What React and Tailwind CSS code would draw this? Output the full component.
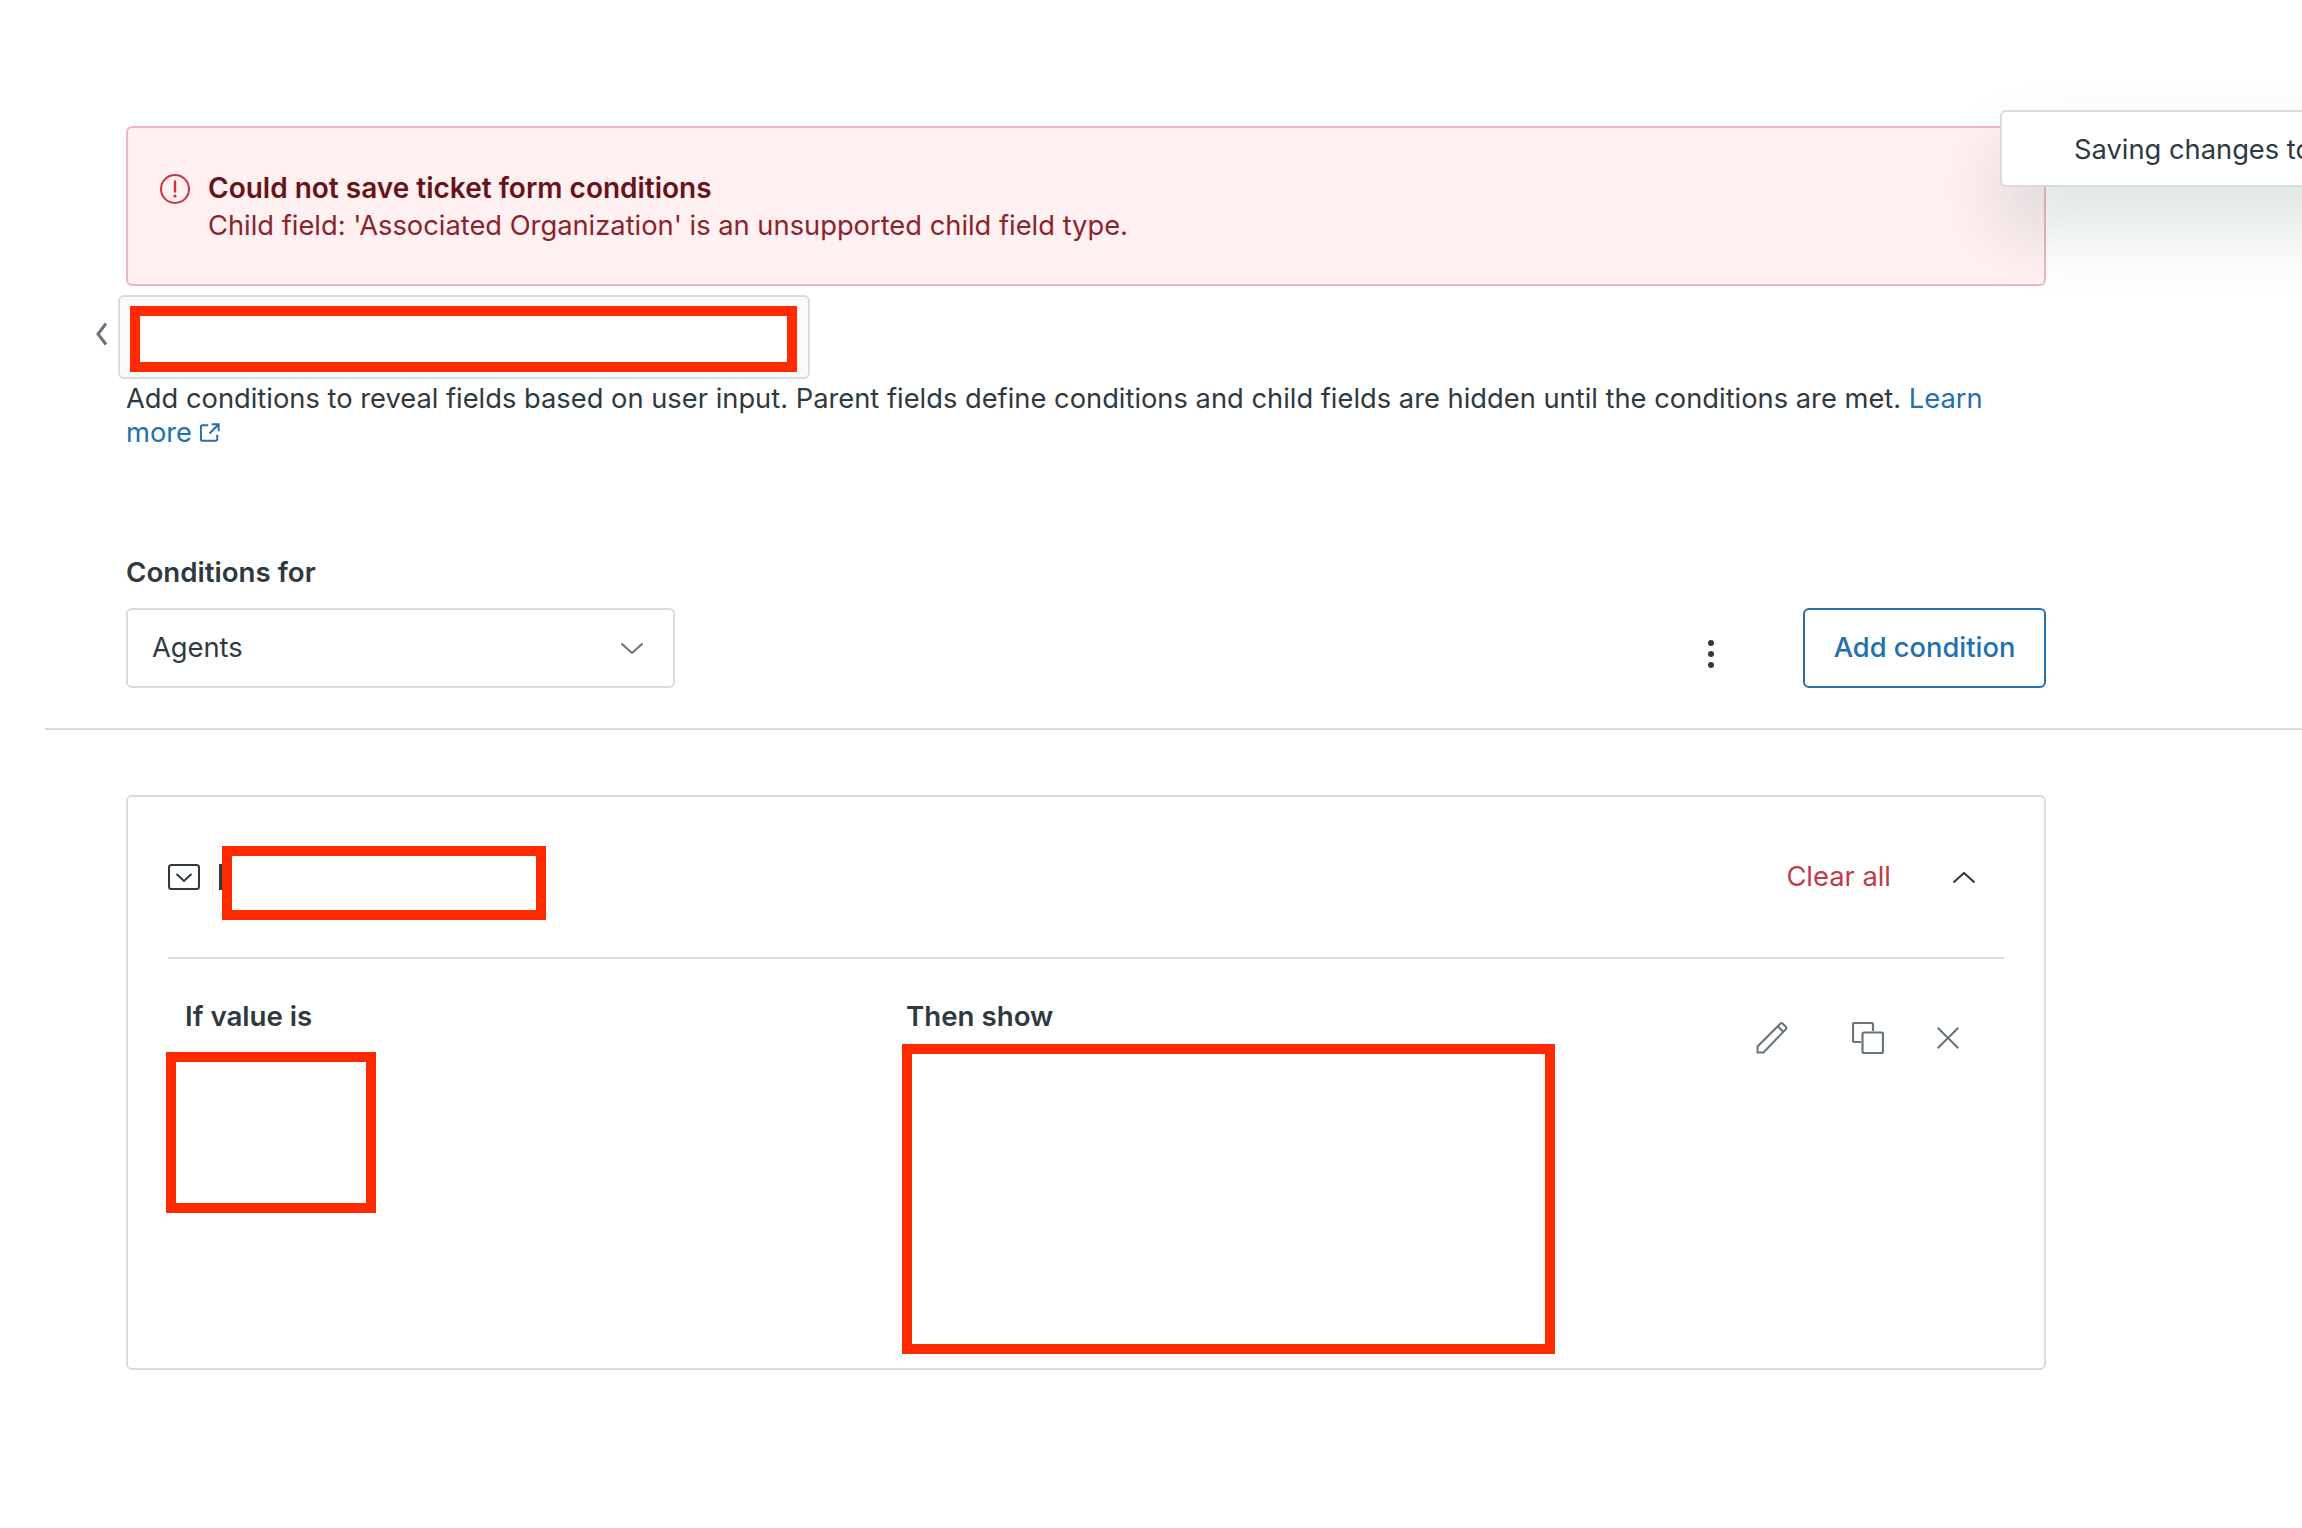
import React from "react";

const Redacted = ({ className }) => (
  <div className={`border-[10px] border-[#ff2a00] bg-white ${className}`} />
);

const AlertIcon = () => (
  <svg width="30" height="30" viewBox="0 0 30 30" fill="none" className="shrink-0 mt-[5px]">
    <circle cx="15" cy="15" r="14" stroke="#cc3340" strokeWidth="2" />
    <path d="M15 7.5v10" stroke="#cc3340" strokeWidth="2.4" strokeLinecap="round" />
    <circle cx="15" cy="22" r="1.6" fill="#cc3340" />
  </svg>
);

const BackIcon = () => (
  <svg width="13" height="24" viewBox="0 0 13 24" fill="none" stroke="#68737d" strokeWidth="3" className="absolute -left-[25px] top-[25px]">
    <path d="M11 1.500L3 12l8 10.500" />
  </svg>
);

const ExternalIcon = () => (
  <svg width="20" height="20" viewBox="0 0 22 22" fill="none" stroke="#2370ae" strokeWidth="2.200" className="inline-block ml-2 align-[-1px]">
    <path d="M9 2.500H2.500a1.500 1.500 0 0 0-1.500 1.500v14a1.500 1.500 0 0 0 1.500 1.500h15a1.500 1.500 0 0 0 1.500-1.500V13" />
    <path d="M13 1.500h7.500V9M20 2l-9.500 9.500" />
  </svg>
);

const Chevron = ({ up, color }) => (
  <svg width="22" height="11" viewBox="0 0 22 11" fill="none" stroke={color} strokeWidth="2" className="shrink-0">
    <path d={up ? "M0.500 10.500L11 1l10.500 9.500" : "M0.500 0.500L11 10l10.500-9.500"} />
  </svg>
);

const FieldIcon = () => (
  <svg width="32" height="26" viewBox="0 0 32 26" fill="none" stroke="#2f3941" className="shrink-0">
    <rect x="1" y="1" width="30" height="24" rx="2.500" strokeWidth="2" />
    <path d="M8.500 10l7.500 7 7.500-7" strokeWidth="2" />
  </svg>
);

const PencilIcon = () => (
  <svg width="32" height="32" viewBox="0 0 32 32" fill="none" stroke="#68737d" strokeWidth="2">
    <path d="M1.500 30.500v-6L24.500 1.500a1.500 1.500 0 0 1 2 0l3.500 3.500a1.500 1.500 0 0 1 0 2L7.500 30.500z" />
    <path d="M22 4.500l5.500 5.500" />
  </svg>
);

const CopyIcon = () => (
  <svg width="32" height="32" viewBox="0 0 32 32" fill="none" stroke="#68737d" strokeWidth="2.200">
    <path d="M21 9V2.500A1.500 1.500 0 0 0 19.500 1h-17A1.500 1.500 0 0 0 1 2.500v16A1.500 1.500 0 0 0 2.500 20H9" />
    <rect x="10.500" y="10.500" width="20.500" height="20.500" rx="1.500" />
  </svg>
);

const CloseIcon = () => (
  <svg width="22" height="22" viewBox="0 0 22 22" fill="none" stroke="#68737d" strokeWidth="2">
    <path d="M0.700 0.700l20.600 20.600M21.300 0.700L0.700 21.300" />
  </svg>
);

export default function App() {
  return (
    <div className="relative h-[1528px] overflow-hidden bg-white font-['Inter',sans-serif] text-[27.3px] leading-[34px] text-[#2f3941]">
      {/* Toast sits on top of the alert and runs off the page */}
      <div className="absolute left-[2000px] top-[110px] w-[500px] h-[77px] rounded-[6px] border-2 border-[#d8dcde] bg-white pl-[72px] pt-[2px] flex items-center shadow-[0_40px_70px_0_rgba(23,73,77,0.16)] whitespace-nowrap">
        Saving changes to
      </div>

      <div className="w-[1920px] ml-[126px] pt-[126px]">
        <div className="h-[160px] rounded-[6px] border-2 border-[#eeb7bb] bg-[#fff0f1] pl-[32px] pt-[41px] flex items-start gap-[18px]">
          <AlertIcon />
          <div className="text-[#8c232c] leading-[38px]">
            <div className="font-semibold text-[28px] text-[#681219]">Could not save ticket form conditions</div>
            <div>Child field: 'Associated Organization' is an unsupported child field type.</div>
          </div>
        </div>

        <div className="relative mt-[9px] w-[692px] h-[84px] -ml-[8px] rounded-[6px] border-2 border-[#d8dcde] bg-[#f8f9f9] pl-[10px] pt-[9px]">
          <BackIcon />
          <Redacted className="w-[667px] h-[66px]" />
        </div>

        <p className="mt-[3px]">
          Add conditions to reveal fields based on user input. Parent fields define conditions and child fields are hidden until the conditions are met.{" "}
          <span className="text-[#2370ae]">
            Learn more
            <ExternalIcon />
          </span>
        </p>

        <div className="mt-[105px] font-semibold text-[27.7px]">Conditions for</div>
        <div className="mt-[19px] flex items-center">
          <div className="w-[549px] h-[80px] rounded-[6px] border-2 border-[#d8dcde] pl-[24px] pr-[30px] flex items-center justify-between">
            Agents
            <Chevron color="#68737d" />
          </div>
          <div className="ml-auto mr-[89px] flex flex-col gap-[5px] mt-[12px]">
            <span className="w-[6px] h-[6px] rounded-full bg-[#2f3941]" />
            <span className="w-[6px] h-[6px] rounded-full bg-[#2f3941]" />
            <span className="w-[6px] h-[6px] rounded-full bg-[#2f3941]" />
          </div>
          <div className="w-[243px] h-[80px] rounded-[6px] border-2 border-[#2370ae] text-[#2370ae] font-medium flex items-center justify-center">
            Add condition
          </div>
        </div>
      </div>

      <div className="ml-[45px] mt-[40px] border-t-2 border-[#d8dcde]" />

      <div className="ml-[126px] mt-[65px] w-[1920px] h-[575px] rounded-[6px] border-2 border-[#d8dcde] px-[40px]">
        <div className="h-[160px] flex items-center">
          <FieldIcon />
          <div className="ml-[19px] w-[3px] h-[26px] bg-[#2f3941]" />
          <Redacted className="w-[324px] h-[74px] mb-[-12px]" />
          <div className="ml-auto text-[#c23a47] mr-[62px]">Clear all</div>
          <div className="mr-[29px]">
            <Chevron up color="#2f3941" />
          </div>
        </div>
        <div className="border-t-2 border-[#d8dcde]" />
        <div className="flex mt-[40px]">
          <div className="w-[734px]">
            <div className="pl-[17px] font-semibold text-[27.7px]">If value is</div>
            <Redacted className="w-[210px] h-[161px] ml-[-2px] mt-[19px]" />
          </div>
          <div className="w-[653px]">
            <div className="pl-[4px] font-semibold text-[27.7px]">Then show</div>
            <Redacted className="w-[653px] h-[310px] mt-[11px]" />
          </div>
          <div className="ml-auto flex items-center gap-[64px] mr-[45px] mt-[23px] h-[32px]">
            <PencilIcon />
            <div className="flex items-center gap-[53px]">
              <CopyIcon />
              <CloseIcon />
            </div>
          </div>
        </div>
      </div>
    </div>
  );
}
